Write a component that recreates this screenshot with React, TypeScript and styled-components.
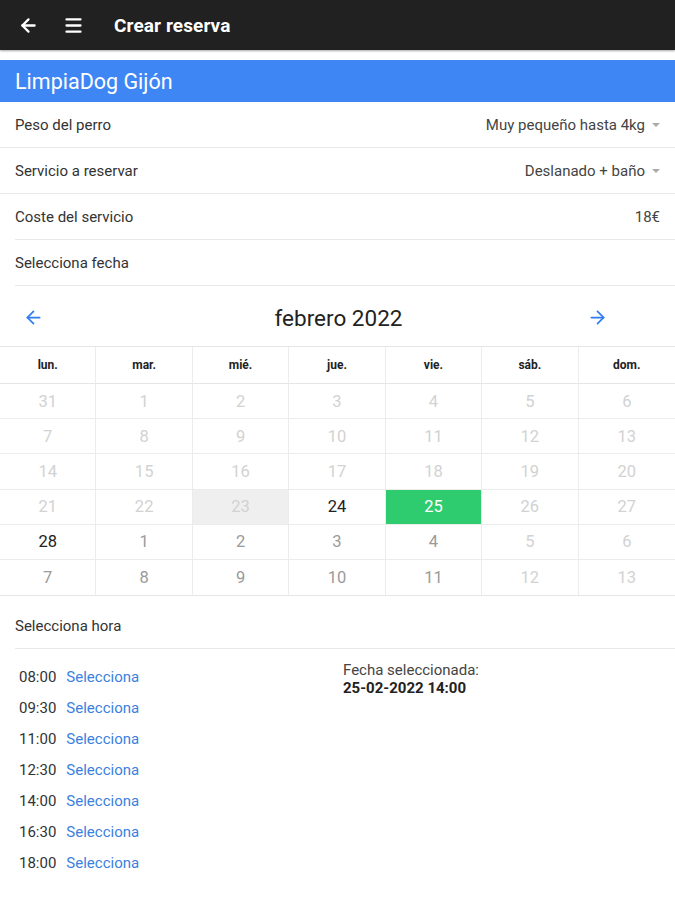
import React from "react";
import styled, { createGlobalStyle } from "styled-components";
import { ArrowLeft, ArrowRight, Menu } from "lucide-react";

const Global = createGlobalStyle`
  html, body { margin: 0; padding: 0; background: #fff; }
  body { font-family: Roboto, "Noto Sans", Arial, sans-serif; -webkit-font-smoothing: antialiased; }
  * { box-sizing: border-box; }
`;

const Page = styled.div`
  width: 675px;
  min-height: 900px;
  background: #fff;
`;

const TopBar = styled.header`
  height: 50px;
  background: #212121;
  display: flex;
  align-items: center;
  padding-left: 17px;
  color: #fff;
  box-shadow: 0 1px 2px rgba(0, 0, 0, 0.35);
`;

const IconBtn = styled.span`
  display: flex;
  align-items: center;
  justify-content: center;
  width: 22px;
  margin-right: 23px;
`;

const Title = styled.h1`
  margin: 0 0 0 7px;
  font-size: 19px;
  font-weight: 700;
  letter-spacing: 0.1px;
`;

const Brand = styled.div`
  margin-top: 10px;
  height: 42px;
  background: #3f86f5;
  color: #fff;
  font-size: 21.5px;
  display: flex;
  align-items: center;
  padding-left: 15px;
`;

const Row = styled.div<{ $inset?: boolean }>`
  height: 46px;
  display: flex;
  align-items: center;
  justify-content: space-between;
  padding: 0 15px;
  font-size: 15px;
  color: #333;
  position: relative;
  &::after {
    content: "";
    position: absolute;
    left: ${(p) => (p.$inset ? "15px" : "0")};
    right: 0;
    bottom: 0;
    height: 1.5px;
    background: #e9e9e9;
  }
`;

const Value = styled.span`
  display: flex;
  align-items: center;
  color: #444;
`;

const Caret = styled.span`
  width: 0;
  height: 0;
  margin-left: 7px;
  border-left: 4px solid transparent;
  border-right: 4px solid transparent;
  border-top: 4px solid #aaa;
`;

const CalNav = styled.div`
  height: 60px;
  padding: 3px 67px 0 23px;
  display: flex;
  align-items: center;
  justify-content: space-between;
  color: #2f7cf0;
`;

const Month = styled.div`
  font-size: 22.5px;
  color: #222;
  margin-left: 46px;
`;

const Grid = styled.div`
  display: grid;
  grid-template-columns: repeat(7, 1fr);
  border-top: 1.5px solid #e6e6e6;
  border-bottom: 1.5px solid #e6e6e6;
`;

const HeadCell = styled.div<{ $last?: boolean }>`
  height: 37px;
  display: flex;
  align-items: center;
  justify-content: center;
  font-size: 12px;
  font-weight: 700;
  color: #222;
  border-right: ${(p) => (p.$last ? "none" : "1.5px solid #ececec")};
  border-bottom: 1.5px solid #e6e6e6;
`;

type Tone = "off" | "mid" | "on" | "sel" | "grey";

const DayCell = styled.div<{ $tone: Tone; $last?: boolean; $lastRow?: boolean }>`
  height: 35.2px;
  display: flex;
  align-items: center;
  justify-content: center;
  font-size: 16.5px;
  border-right: ${(p) => (p.$last ? "none" : "1.5px solid #ececec")};
  border-bottom: ${(p) => (p.$lastRow ? "none" : "1.5px solid #ececec")};
  color: ${(p) =>
    p.$tone === "off" || p.$tone === "grey"
      ? "#d2d2d2"
      : p.$tone === "mid"
      ? "#9a9a9a"
      : p.$tone === "sel"
      ? "#fff"
      : "#222"};
  background: ${(p) =>
    p.$tone === "sel" ? "#2ecc6e" : p.$tone === "grey" ? "#efefef" : "#fff"};
`;

const HourSection = styled.div`
  margin-top: 7px;
`;

const Bottom = styled.div`
  display: grid;
  grid-template-columns: 343px 1fr;
  padding-top: 12px;
`;

const Slots = styled.div`
  display: flex;
  flex-direction: column;
  padding-left: 19px;
`;

const Slot = styled.div`
  height: 31px;
  display: flex;
  align-items: center;
  font-size: 15px;
  color: #333;
`;

const SlotLink = styled.a`
  color: #3b7fe0;
  margin-left: 10px;
  text-decoration: none;
`;

const Summary = styled.div`
  font-size: 15px;
  color: #444;
  line-height: 18px;
`;

const SummaryValue = styled.div`
  font-weight: 700;
  color: #222;
`;

const days = ["lun.", "mar.", "mié.", "jue.", "vie.", "sáb.", "dom."];

const weeks: [string, Tone][][] = [
  [["31", "off"], ["1", "off"], ["2", "off"], ["3", "off"], ["4", "off"], ["5", "off"], ["6", "off"]],
  [["7", "off"], ["8", "off"], ["9", "off"], ["10", "off"], ["11", "off"], ["12", "off"], ["13", "off"]],
  [["14", "off"], ["15", "off"], ["16", "off"], ["17", "off"], ["18", "off"], ["19", "off"], ["20", "off"]],
  [["21", "off"], ["22", "off"], ["23", "grey"], ["24", "on"], ["25", "sel"], ["26", "off"], ["27", "off"]],
  [["28", "on"], ["1", "mid"], ["2", "mid"], ["3", "mid"], ["4", "mid"], ["5", "off"], ["6", "off"]],
  [["7", "mid"], ["8", "mid"], ["9", "mid"], ["10", "mid"], ["11", "mid"], ["12", "off"], ["13", "off"]],
];

const hours = ["08:00", "09:30", "11:00", "12:30", "14:00", "16:30", "18:00"];

export default function App() {
  return (
    <Page>
      <Global />
      <TopBar>
        <IconBtn>
          <ArrowLeft size={21} strokeWidth={2.6} />
        </IconBtn>
        <IconBtn>
          <Menu size={21} strokeWidth={2.6} />
        </IconBtn>
        <Title>Crear reserva</Title>
      </TopBar>
      <Brand>LimpiaDog Gijón</Brand>
      <Row>
        <span>Peso del perro</span>
        <Value>
          Muy pequeño hasta 4kg<Caret />
        </Value>
      </Row>
      <Row>
        <span>Servicio a reservar</span>
        <Value>
          Deslanado + baño<Caret />
        </Value>
      </Row>
      <Row $inset>
        <span>Coste del servicio</span>
        <Value>18€</Value>
      </Row>
      <Row $inset>
        <span>Selecciona fecha</span>
      </Row>
      <CalNav>
        <ArrowLeft size={21} strokeWidth={2} />
        <Month>febrero 2022</Month>
        <ArrowRight size={21} strokeWidth={2} />
      </CalNav>
      <Grid>
        {days.map((d, i) => (
          <HeadCell key={d} $last={i === 6}>
            {d}
          </HeadCell>
        ))}
        {weeks.map((w, wi) =>
          w.map(([n, t], di) => (
            <DayCell key={`${wi}-${di}`} $tone={t} $last={di === 6} $lastRow={wi === weeks.length - 1}>
              {n}
            </DayCell>
          ))
        )}
      </Grid>
      <HourSection>
        <Row $inset>
          <span>Selecciona hora</span>
        </Row>
        <Bottom>
          <Slots>
            {hours.map((h) => (
              <Slot key={h}>
                {h}
                <SlotLink href="#">Selecciona</SlotLink>
              </Slot>
            ))}
          </Slots>
          <Summary>
            Fecha seleccionada:
            <SummaryValue>25-02-2022 14:00</SummaryValue>
          </Summary>
        </Bottom>
      </HourSection>
    </Page>
  );
}
